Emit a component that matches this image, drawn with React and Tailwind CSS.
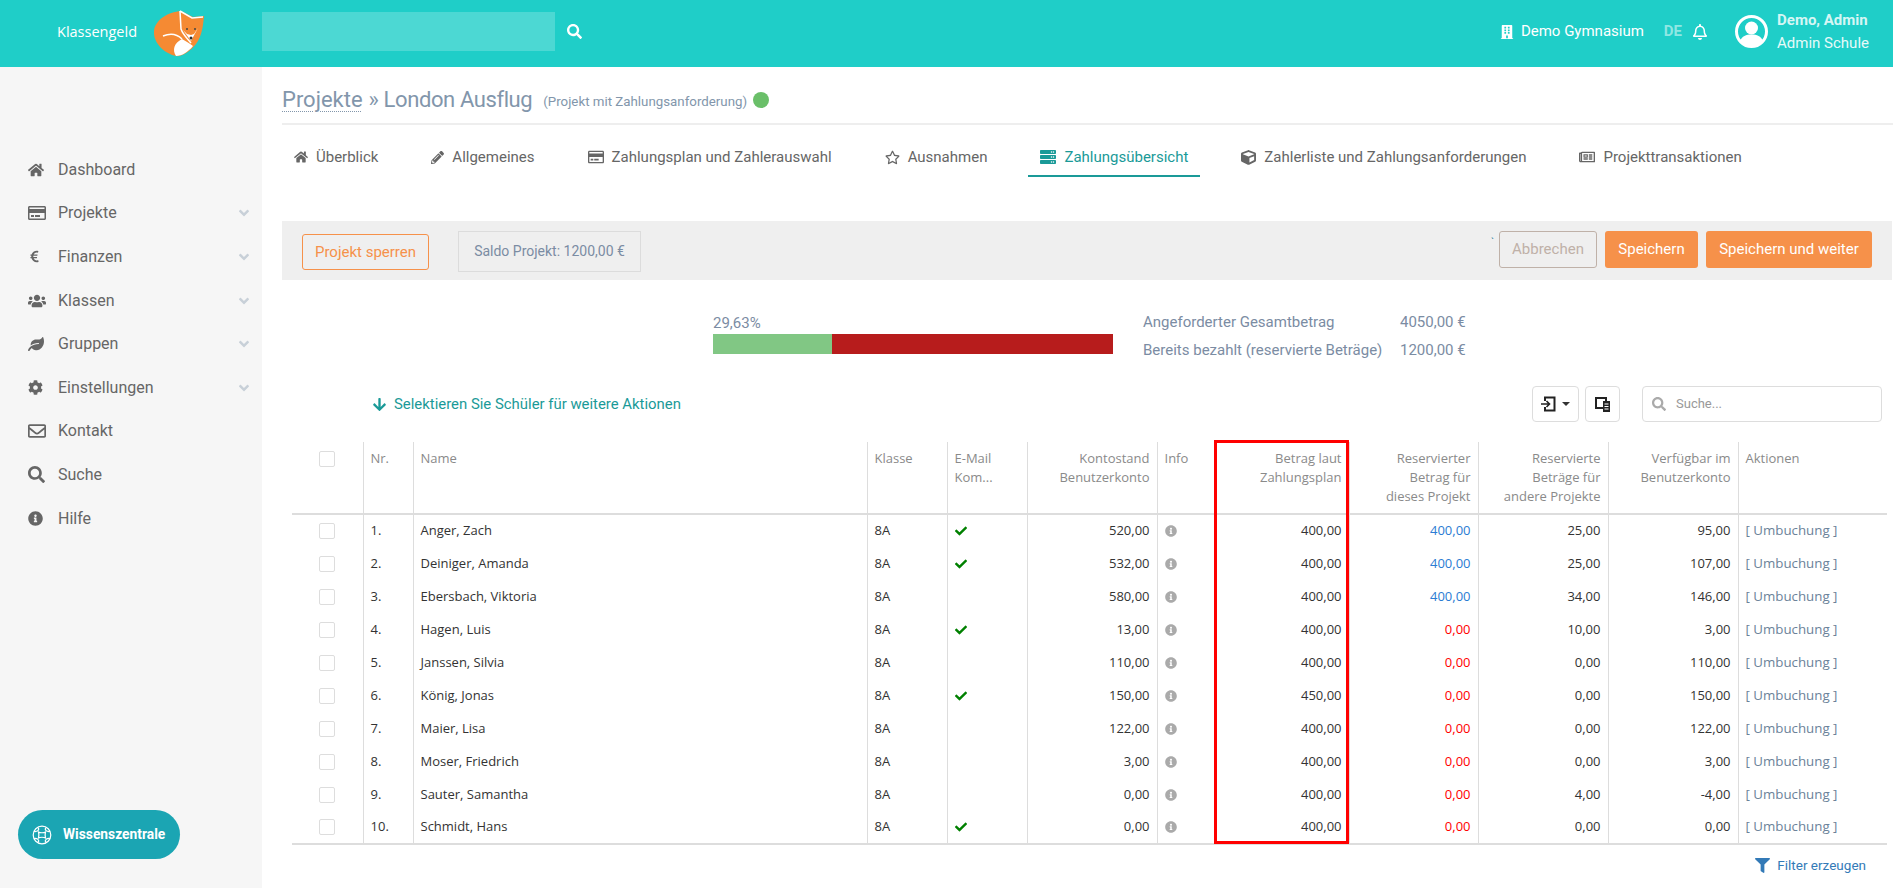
import React from 'react';
import {
  FaHome, FaPencilAlt, FaRegCreditCard, FaEuroSign, FaUsers, FaLeaf, FaCog, FaRegEnvelope, FaSearch, FaInfoCircle,
  FaRegStar, FaServer, FaCube, FaRegNewspaper, FaBuilding, FaRegBell, FaAngleDown, FaCheck, FaArrowDown, FaFilter,
} from 'react-icons/fa';

const navItems = [
  { icon: FaHome, label: 'Dashboard', size: 16 },
  { icon: FaRegCreditCard, label: 'Projekte', size: 18, sub: true },
  { icon: FaEuroSign, label: 'Finanzen', size: 13, sub: true },
  { icon: FaUsers, label: 'Klassen', size: 18, sub: true },
  { icon: FaLeaf, label: 'Gruppen', size: 16, sub: true },
  { icon: FaCog, label: 'Einstellungen', size: 15, sub: true },
  { icon: FaRegEnvelope, label: 'Kontakt', size: 18 },
  { icon: FaSearch, label: 'Suche', size: 17 },
  { icon: FaInfoCircle, label: 'Hilfe', size: 15 },
];

const tabs = [
  { icon: FaHome, label: 'Überblick', size: 14 },
  { icon: FaPencilAlt, label: 'Allgemeines', size: 13 },
  { icon: FaRegCreditCard, label: 'Zahlungsplan und Zahlerauswahl', size: 16 },
  { icon: FaRegStar, label: 'Ausnahmen', size: 15 },
  { icon: FaServer, label: 'Zahlungsübersicht', size: 16, active: true },
  { icon: FaCube, label: 'Zahlerliste und Zahlungsanforderungen', size: 15 },
  { icon: FaRegNewspaper, label: 'Projekttransaktionen', size: 16 },
];

const rows = [
  ['Anger, Zach', true, '520,00', '400,00', '400,00', '25,00', '95,00'],
  ['Deiniger, Amanda', true, '532,00', '400,00', '400,00', '25,00', '107,00'],
  ['Ebersbach, Viktoria', false, '580,00', '400,00', '400,00', '34,00', '146,00'],
  ['Hagen, Luis', true, '13,00', '400,00', '0,00', '10,00', '3,00'],
  ['Janssen, Silvia', false, '110,00', '400,00', '0,00', '0,00', '110,00'],
  ['König, Jonas', true, '150,00', '450,00', '0,00', '0,00', '150,00'],
  ['Maier, Lisa', false, '122,00', '400,00', '0,00', '0,00', '122,00'],
  ['Moser, Friedrich', false, '3,00', '400,00', '0,00', '0,00', '3,00'],
  ['Sauter, Samantha', false, '0,00', '400,00', '0,00', '4,00', '-4,00'],
  ['Schmidt, Hans', true, '0,00', '400,00', '0,00', '0,00', '0,00'],
];

const colWidths = [71, 50, 454, 80, 80, 130, 57, 135, 129, 130, 130, 149];

const FoxLogo = () => (
  <svg width="60" height="52" viewBox="0 0 60 52">
    <path d="M4 25C5 14 18 6 31 5L43 11L54 10C53 20 52 30 46 38C40 46 31 51 26 50C16 48 3 38 4 25Z" fill="#f58a33" />
    <path d="M26 50C22 44 24 37 32 33C36 35 40 38 43 40C38 46 32 50 26 50Z" fill="#fff" />
    <path d="M13 30C20 27 27 28 32 33" stroke="#fff" strokeWidth="1.5" fill="none" />
    <path d="M30 5L31 23C33 29 38 33 41 37" stroke="#fff" strokeWidth="1.5" fill="none" />
    <path d="M30 5L42 12L53 11" stroke="#fff" strokeWidth="1.5" fill="none" />
    <path d="M33 24L41 35L48 22L44 28L41 29L37 28Z" fill="#fff" />
    <circle cx="37" cy="23" r="1" fill="#444" />
    <circle cx="45" cy="23" r="1" fill="#444" />
    <circle cx="41" cy="32" r="1.5" fill="#333" />
  </svg>
);

const Avatar = () => (
  <svg width="33" height="33" viewBox="0 0 33 33">
    <circle cx="16.5" cy="16.5" r="15" fill="none" stroke="#fff" strokeWidth="3" />
    <circle cx="16.5" cy="13" r="6.5" fill="#fff" />
    <path d="M5 26C7 21 11 19.5 16.5 19.5C22 19.5 26 21 28 26C25 30 21 32 16.5 32C12 32 8 30 5 26Z" fill="#fff" />
  </svg>
);

const KnowledgeIcon = () => (
  <svg width="20" height="20" viewBox="0 0 20 20" fill="none" stroke="#fff" strokeWidth="1.2">
    <circle cx="10" cy="10" r="8.8" />
    <path d="M6 2.5C8 5 5 7 2 6.5M14 2.5C12 5 15 7 18 6.5M6 17.5C8 15 5 13 2 13.5M14 17.5C12 15 15 13 18 13.5" />
    <path d="M6.5 7C8 8 12 8 13.5 7C13 9 13 11 13.5 13C12 12 8 12 6.5 13C7 11 7 9 6.5 7Z" />
  </svg>
);

const ExportIcon = () => (
  <svg width="15" height="16" viewBox="0 0 15 16" fill="none" stroke="#222" strokeWidth="2">
    <path d="M4 5V1.5H13.5V14.5H4V11" />
    <path d="M0 8H8M5.5 5L8.5 8L5.5 11" strokeWidth="1.6" />
  </svg>
);

const ColumnsIcon = () => (
  <svg width="17" height="17" viewBox="0 0 17 17">
    <path d="M11 12H2V2H12V5" fill="none" stroke="#222" strokeWidth="2" />
    <rect x="9" y="5" width="7" height="11" fill="#222" />
    <path d="M10.5 8H14.5M10.5 10.5H14.5M10.5 13H14.5" stroke="#fff" strokeWidth="1" />
  </svg>
);

const Checkbox = () => <div className="w-4 h-4 border border-[#ddd] rounded-[2px] bg-white mx-auto" />;

const Th = ({ children, right }) => (
  <th className={`align-top pt-[7px] px-[7px] font-normal text-[13px] leading-[19px] text-[#8a8a8a] border-r border-[#ddd] border-b-2 ${right ? 'text-right' : 'text-left'}`}>
    {children}
  </th>
);

const Td = ({ children, right, className = '' }) => (
  <td className={`px-[7px] border-r border-[#ddd] whitespace-nowrap ${right ? 'text-right' : 'text-left'} ${className}`}>
    {children}
  </td>
);

export default function App() {
  return (
    <div className="h-screen overflow-hidden flex flex-col bg-white font-['Roboto',sans-serif]">
      {/* Header */}
      <header className="h-[67px] shrink-0 bg-[#1fcec8] flex items-center text-white">
        <div className="w-[262px] shrink-0 flex items-center pl-[57px]">
          <span className="font-['Open_Sans',sans-serif] text-[14.5px] -mt-[4px]">Klassengeld</span>
          <span className="ml-[13px] -mt-[3px]"><FoxLogo /></span>
        </div>
        <div className="w-[293px] h-[39px] bg-[#4cd8d3] -mt-[4px]" />
        <FaSearch size={15} className="ml-3 -mt-[4px]" />
        <div className="ml-auto flex items-center -mt-[4px] mr-[24px]">
          <FaBuilding size={14} />
          <span className="ml-[7px] text-[15px]">Demo Gymnasium</span>
          <span className="ml-5 text-[15px] font-bold text-[#8fe7e3]">DE</span>
          <FaRegBell size={16} className="ml-[10px]" />
          <span className="ml-[27px]"><Avatar /></span>
          <div className="ml-[9px] text-[15px] leading-[23px]">
            <div className="font-bold text-[#d6f6f4]">Demo, Admin</div>
            <div className="text-[#e6faf9]">Admin Schule</div>
          </div>
        </div>
      </header>

      <div className="flex-1 flex min-h-0">
        {/* Sidebar */}
        <aside className="w-[262px] shrink-0 bg-[#f6f6f6] flex flex-col pt-[81px]">
          <nav>
            {navItems.map((item) => (
              <div key={item.label} className="h-[43.6px] flex items-center pl-[28px] pr-[10px] text-[#666] text-[16px]">
                <span className="w-[30px]"><item.icon size={item.size} /></span>
                <span>{item.label}</span>
                {item.sub && <FaAngleDown size={16} className="ml-auto text-[#c8d0d8]" />}
              </div>
            ))}
          </nav>
          <div className="mt-auto mb-[29px] ml-[18px] w-[162px] h-[49px] rounded-full bg-[#1ba5b3] flex items-center pl-[14px] text-white text-[13.8px] font-bold">
            <KnowledgeIcon />
            <span className="ml-[11px]">Wissenszentrale</span>
          </div>
        </aside>

        {/* Main */}
        <main className="flex-1 min-w-0 pl-5">
          <div className="h-[58px] border-b-2 border-[#eee] flex items-center pt-[9px] text-[#8296ab]">
            <span className="text-[22px] underline decoration-dotted decoration-1 underline-offset-4">Projekte</span>
            <span className="text-[22px] ml-[6px] tracking-[-0.4px]">» London Ausflug</span>
            <span className="text-[13.3px] ml-[11px] mt-[4px]">(Projekt mit Zahlungsanforderung)</span>
            <span className="w-4 h-4 rounded-full bg-[#6abf69] ml-[6px]" />
          </div>

          {/* Tabs */}
          <ul className="flex gap-[29px] text-[15px] text-[#666]">
            {tabs.map((tab) => (
              <li
                key={tab.label}
                className={`flex items-center gap-2 px-3 pt-[22px] pb-2 leading-5 border-b-2 ${tab.active ? 'border-[#1a9a98] text-[#1a9a98]' : 'border-transparent'}`}
              >
                <tab.icon size={tab.size} />
                <span>{tab.label}</span>
              </li>
            ))}
          </ul>

          {/* Action bar */}
          <div className="mt-[44px] mr-px h-[59px] bg-[#efefef] flex items-start pt-[10px] pl-5 pr-5 text-[15px]">
            <button className="mt-[3px] w-[127px] h-[36px] border border-[#f6914a] rounded-[3px] text-[#f6914a]">Projekt sperren</button>
            <div className="ml-[29px] w-[183px] h-[41px] border border-[#dcdcdc] flex items-center justify-center text-[14px] text-[#7b8ca3]">Saldo Projekt: 1200,00 €</div>
            <span className="ml-auto mr-[5px] text-[10px] leading-[24px] text-[#1a7a9a]">`</span>
            <button className="w-[98px] h-[37px] border border-[#bfb1a8] rounded-[3px] text-[#bfb1a8]">Abbrechen</button>
            <button className="ml-2 w-[93px] h-[37px] bg-[#f6914a] rounded-[3px] text-white">Speichern</button>
            <button className="ml-2 w-[166px] h-[37px] bg-[#f6914a] rounded-[3px] text-white">Speichern und weiter</button>
          </div>

          {/* Progress */}
          <div className="mt-[28px] pl-[431px] flex items-start text-[15px] text-[#7b8ca3]">
            <div className="w-[400px] pt-[5px]">
              <div className="leading-5">29,63%</div>
              <div className="mt-px h-5 flex">
                <div className="w-[119px] bg-[#81c784]" />
                <div className="flex-1 bg-[#b71c1c]" />
              </div>
            </div>
            <div className="ml-[30px] grid grid-cols-[257px_auto] leading-[28px]">
              <span>Angeforderter Gesamtbetrag</span>
              <span>4050,00 €</span>
              <span>Bereits bezahlt (reservierte Beträge)</span>
              <span>1200,00 €</span>
            </div>
          </div>

          {/* Toolbar */}
          <div className="mt-[22px] h-[36px] flex items-center pl-[90px] pr-[11px]">
            <FaArrowDown size={15} className="text-[#1a9a98]" />
            <span className="ml-[7px] text-[14.9px] text-[#1a9a98]">Selektieren Sie Schüler für weitere Aktionen</span>
            <button className="ml-auto w-[47px] h-[36px] border border-[#ddd] rounded-[4px] flex items-center justify-center gap-[6px]">
              <ExportIcon />
              <span className="border-x-[4px] border-x-transparent border-t-[4px] border-t-[#333]" />
            </button>
            <button className="ml-[6px] w-[35px] h-[36px] border border-[#ddd] rounded-[4px] flex items-center justify-center">
              <ColumnsIcon />
            </button>
            <div className="ml-[22px] w-[240px] h-[36px] border border-[#ddd] rounded-[4px] flex items-center pl-[9px] text-[13px] text-[#999]">
              <FaSearch size={14} className="text-[#aaa]" />
              <span className="ml-[10px]">Suche...</span>
            </div>
          </div>

          {/* Table */}
          <div className="relative mt-5 ml-[10px] w-[1595px]">
            <table className="w-full table-fixed border-collapse font-['Open_Sans',sans-serif] text-[13px] text-[#333]">
              <colgroup>
                {colWidths.map((w, i) => <col key={i} style={{ width: w }} />)}
              </colgroup>
              <thead>
                <tr className="h-[72px]">
                  <Th><div className="mt-[2px]"><Checkbox /></div></Th>
                  <Th>Nr.</Th>
                  <Th>Name</Th>
                  <Th>Klasse</Th>
                  <Th>E-Mail<br />Kom...</Th>
                  <Th right>Kontostand<br />Benutzerkonto</Th>
                  <Th>Info</Th>
                  <Th right>Betrag laut<br />Zahlungsplan</Th>
                  <Th right>Reservierter<br />Betrag für<br />dieses Projekt</Th>
                  <Th right>Reservierte<br />Beträge für<br />andere Projekte</Th>
                  <Th right>Verfügbar im<br />Benutzerkonto</Th>
                  <th className="align-top pt-[7px] px-[7px] font-normal text-left text-[13px] leading-[19px] text-[#8a8a8a] border-b-2 border-[#ddd]">Aktionen</th>
                </tr>
              </thead>
              <tbody className="border-b-2 border-[#ddd]">
                {rows.map((row, i) => (
                  <tr key={row[0]} className="h-[33px]">
                    <Td><Checkbox /></Td>
                    <Td>{i + 1}.</Td>
                    <Td>{row[0]}</Td>
                    <Td>8A</Td>
                    <Td>{row[1] && <FaCheck size={12} className="text-[#008000]" />}</Td>
                    <Td right>{row[2]}</Td>
                    <Td><FaInfoCircle size={12} className="text-[#aaa]" /></Td>
                    <Td right>{row[3]}</Td>
                    <Td right className={row[4] === '0,00' ? 'text-[#f00]' : 'text-[#2b7cd3]'}>{row[4]}</Td>
                    <Td right>{row[5]}</Td>
                    <Td right>{row[6]}</Td>
                    <td className="px-[7px] text-[#6b8299] text-[13.3px] whitespace-nowrap">[ Umbuchung ]</td>
                  </tr>
                ))}
              </tbody>
            </table>
            {/* Red highlight over the column */}
            <div className="absolute left-[922px] -top-[2px] w-[135px] h-[404px] border-[3px] border-[#f00] pointer-events-none" />
          </div>

          <div className="mt-[10px] flex items-center justify-end pr-[27px] text-[13.5px] text-[#337ab7]">
            <FaFilter size={15} />
            <span className="ml-[7px]">Filter erzeugen</span>
          </div>
        </main>
      </div>
    </div>
  );
}
